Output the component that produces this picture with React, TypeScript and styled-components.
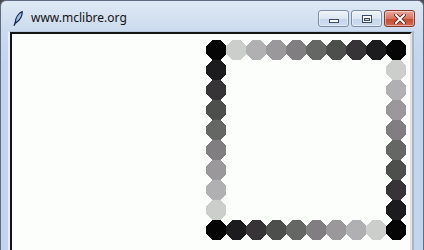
import React from "react";
import styled, { createGlobalStyle } from "styled-components";

const shades = ['#050505', '#1c1b1d', '#363437', '#4d4f4c', '#646763', '#807e80', '#9a989b', '#b0afb2', '#cccecc'];

type Cell = { row: number; col: number; color: string };

// 10x10 ring: corners black, sides shaded
const buildCells = (): Cell[] => {
    const cells: Cell[] = [];
    for (let i = 0; i < 10; i++) {
        for (let j = 0; j < 10; j++) {
            if (i !== 0 && i !== 9 && j !== 0 && j !== 9) continue;
            let color = shades[0];
            const corner = (i === 0 || i === 9) && (j === 0 || j === 9);
            if (!corner) {
                if (i === 0) color = shades[9 - j];
                else if (i === 9) color = shades[j];
                else if (j === 0) color = shades[i];
                else color = shades[9 - i];
            }
            cells.push({ row: i + 1, col: j + 1, color });
        }
    }
    return cells;
};

const GlobalStyle = createGlobalStyle`
    body {
        margin: 0;
        background: #4a4a4a;
        font-family: "Noto Sans", "Open Sans", sans-serif;
    }
`;

const   Window = styled.div`
            width: 424px;
            height: 250px;
            box-sizing: border-box;
            border: 1px solid #5d6c82;
            border-bottom: none;
            border-radius: 6px 6px 0 0;
            background: linear-gradient(#dfe9f5 0px, #cbdbee 30px, #c2d5ed 60px);
            display: flex;
            flex-direction: column;
            overflow: hidden;
        `,
        TitleBar = styled.div`
            height: 30px;
            flex-shrink: 0;
            display: flex;
            align-items: flex-start;
            padding: 0 8px 0 12px;
        `,
        Quill = styled.svg`
            margin-top: 10px;
            flex-shrink: 0;
        `,
        Title = styled.span`
            margin-left: 8px;
            margin-top: 9px;
            font-size: 12px;
            line-height: 16px;
            color: #111;
            flex: 1;
        `,
        Buttons = styled.div`
            display: flex;
            gap: 2px;
            margin-top: 9px;
        `,
        CaptionButton = styled.div<{ $close?: boolean }>`
            width: 31px;
            height: 17px;
            box-sizing: border-box;
            border-radius: 3px;
            border: 1px solid ${p => p.$close ? '#8a3527' : '#7b8ca6'};
            background: ${p => p.$close
                ? 'linear-gradient(#e9ab9c, #d8725e 50%, #c44a31 51%, #cf6a52)'
                : 'linear-gradient(#eef3fa, #dce6f2 50%, #c5d5ea 51%, #cfdcee)'};
            box-shadow: inset 0 0 0 1px rgba(255,255,255,0.45);
            display: flex;
            align-items: center;
            justify-content: center;
        `,
        MinGlyph = styled.svg`
            margin-top: 5px;
        `,
        Client = styled.div`
            flex: 1;
            display: flex;
            margin: 0 9px 0 7px;
            border-left: 2px solid #e6eef8;
            border-top: 1px solid #b9c9dd;
            border-right: 2px solid #a7b6c9;
        `,
        Canvas = styled.div`
            flex: 1;
            background: #fcfefc;
            border-top: 2px solid #141414;
            border-left: 2px solid #141414;
            border-right: 2px solid #e3e3e3;
            padding: 6px 0 0 194px;
        `,
        Ring = styled.div`
            display: grid;
            grid-template-columns: repeat(10, 20px);
            grid-template-rows: repeat(10, 20px);
        `,
        Octagon = styled.svg<{ $row: number; $col: number }>`
            grid-row: ${p => p.$row};
            grid-column: ${p => p.$col};
            display: block;
        `;

function Octa({ cell }: { cell: Cell }) {
    return (
        <Octagon $row={cell.row} $col={cell.col} width="20" height="20" viewBox="0 0 20 20" shapeRendering="crispEdges">
            <polygon points="6,0 14,0 20,6 20,14 14,20 6,20 0,14 0,6" fill={cell.color} />
        </Octagon>
    );
}

export default function App() {
    const cells = buildCells();

    return (
        <>
            <GlobalStyle />
            <Window>
                <TitleBar>
                    <Quill width="10" height="15" viewBox="0 0 10 15">
                        <path d="M2.2 11.5 C2.6 6.5 5.5 2 9.2 0.6 C9.4 4.5 7 9 3 11.8 Z" fill="#9dbde6" stroke="#17264a" strokeWidth="1.2" />
                        <path d="M3 10.5 L1 14.6" stroke="#17264a" strokeWidth="1.4" />
                    </Quill>
                    <Title>www.mclibre.org</Title>
                    <Buttons>
                        <CaptionButton>
                            <MinGlyph width="10" height="4" viewBox="0 0 10 4">
                                <rect x="0.5" y="0.5" width="9" height="3" fill="#fff" stroke="#3a4a60" />
                            </MinGlyph>
                        </CaptionButton>
                        <CaptionButton>
                            <svg width="10" height="8" viewBox="0 0 10 8">
                                <rect x="0.5" y="0.5" width="9" height="7" fill="#fff" stroke="#3a4a60" />
                                <rect x="2.5" y="3.5" width="5" height="2" fill="#c9d7ea" stroke="#3a4a60" />
                            </svg>
                        </CaptionButton>
                        <CaptionButton $close>
                            <svg width="12" height="10" viewBox="0 0 12 10">
                                <path d="M2 1 L10 9 M10 1 L2 9" stroke="#5a1d14" strokeWidth="3.6" strokeLinecap="square" />
                                <path d="M2 1 L10 9 M10 1 L2 9" stroke="#fff" strokeWidth="2" strokeLinecap="square" />
                            </svg>
                        </CaptionButton>
                    </Buttons>
                </TitleBar>
                <Client>
                    <Canvas>
                        <Ring>
                            {cells.map(c => <Octa key={`${c.row}-${c.col}`} cell={c} />)}
                        </Ring>
                    </Canvas>
                </Client>
            </Window>
        </>
    );
}
